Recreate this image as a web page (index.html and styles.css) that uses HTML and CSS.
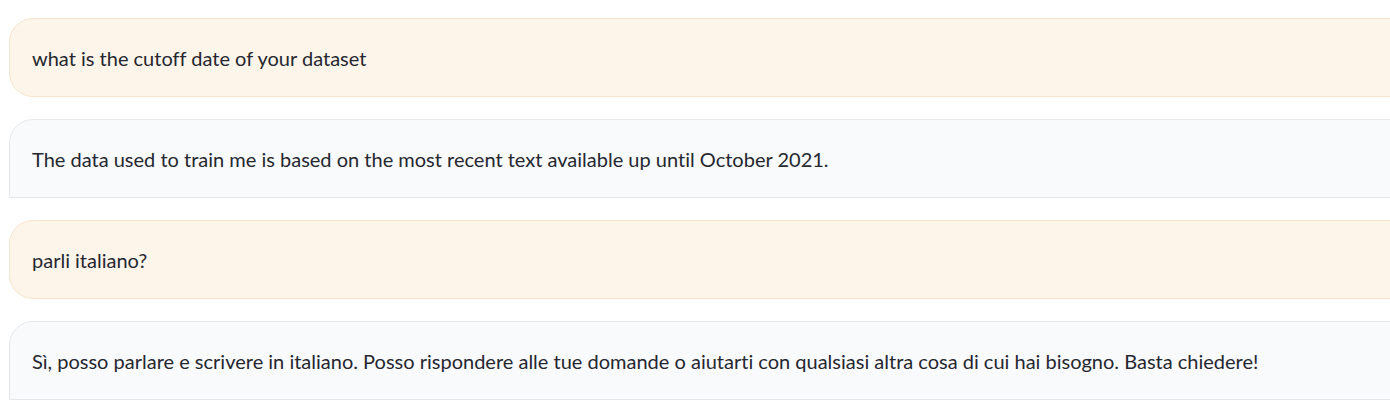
FILE: index.html
```html
<!DOCTYPE html>
<html lang="it">
<head>
<meta charset="utf-8">
<link rel="stylesheet" href="styles.css">
</head>
<body>
<div class="chat">
  <div class="msg user">what is the cutoff date of your dataset</div>
  <div class="msg bot">The data used to train me is based on the most recent text available up until October 2021.</div>
  <div class="msg user">parli italiano?</div>
  <div class="msg bot">Sì, posso parlare e scrivere in italiano. Posso rispondere alle tue domande o aiutarti con qualsiasi altra cosa di cui hai bisogno. Basta chiedere!</div>
</div>
</body>
</html>
```
FILE: styles.css
```css
html, body {
  margin: 0;
  padding: 0;
  background: #ffffff;
  overflow: hidden;
}
.chat {
  display: flex;
  flex-direction: column;
  gap: 22px;
  padding: 18px 0 0 9px;
  margin-right: -30px;
  font-family: Lato, "Noto Sans", sans-serif;
  font-size: 20px;
  font-variant-ligatures: no-common-ligatures;
  color: #262730;
}
.msg {
  box-sizing: border-box;
  height: 79px;
  display: flex;
  align-items: center;
  padding: 0 22px;
  line-height: 28px;
}
.user {
  background: #fdf5ea;
  border: 1px solid #f7e4cc;
  border-radius: 24px 0 0 24px;
}
.bot {
  background: #f8fafc;
  border: 1px solid #e6e8ec;
  border-radius: 24px 0 0 0;
}
```
